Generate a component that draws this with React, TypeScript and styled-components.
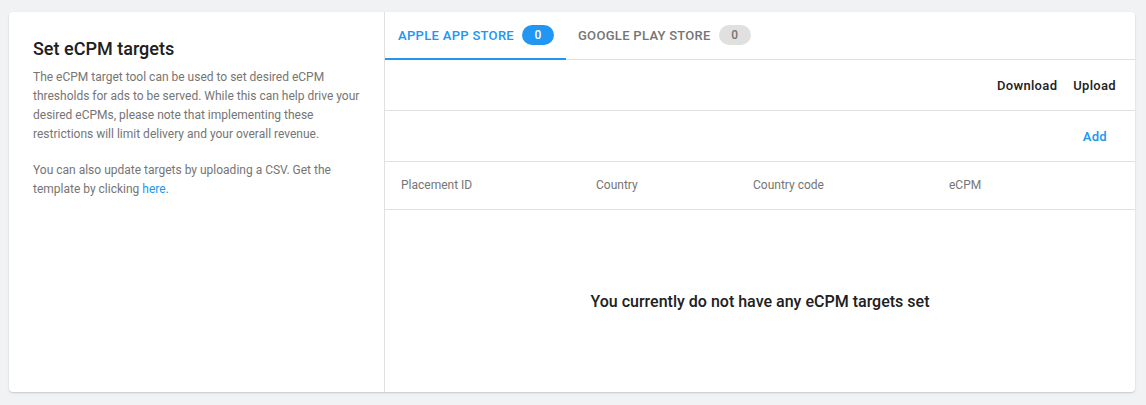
import React from 'react';
import styled, { createGlobalStyle } from 'styled-components';

const GlobalStyle = createGlobalStyle`
  *, *::before, *::after {
    box-sizing: border-box;
  }
  html, body {
    margin: 0;
    padding: 0;
    background: #f1f2f4;
    font-family: Roboto, "Liberation Sans", sans-serif;
  }
`;

const medium = `"Roboto Medium", Roboto, "Liberation Sans", sans-serif`;

const Page = styled.div`
  padding: 12px 11px 13px 9px;
`;

const Card = styled.div`
  display: flex;
  height: 380px;
  background: #fff;
  border-radius: 4px;
  box-shadow: 0 1px 2px rgba(0, 0, 0, 0.18);
  overflow: hidden;
`;

const InfoPanel = styled.div`
  width: 376px;
  flex-shrink: 0;
  padding: 25px 24px;
  border-right: 1px solid #e0e0e0;
`;

const Title = styled.h2`
  margin: 0 0 7px;
  font-family: ${medium};
  font-size: 18px;
  font-weight: 500;
  line-height: 24px;
  color: #212121;
`;

const Paragraph = styled.p`
  margin: 0 0 17px;
  font-size: 12px;
  line-height: 19px;
  color: #757575;
`;

const TextLink = styled.a`
  color: #2196f3;
  text-decoration: none;
`;

const Main = styled.div`
  flex: 1;
  display: flex;
  flex-direction: column;
`;

const TabBar = styled.div`
  display: flex;
  height: 48px;
  padding-left: 1px;
  border-bottom: 1px solid #e0e0e0;
`;

const Tab = styled.div<{ $active?: boolean }>`
  display: flex;
  align-items: center;
  gap: 8px;
  padding: 0 12px;
  font-family: ${medium};
  font-size: 13px;
  font-weight: 500;
  letter-spacing: 0.3px;
  text-transform: uppercase;
  color: ${p => (p.$active ? '#2196f3' : '#757575')};
  border-bottom: 2px solid ${p => (p.$active ? '#2196f3' : 'transparent')};
  margin-bottom: -1px;
  &:first-child {
    margin-left: -1px;
    padding-left: 13px;
  }
`;

const Badge = styled.span<{ $active?: boolean }>`
  display: inline-flex;
  align-items: center;
  justify-content: center;
  min-width: 32px;
  height: 20px;
  border-radius: 10px;
  font-size: 12px;
  font-weight: 500;
  letter-spacing: 0;
  background: ${p => (p.$active ? '#2196f3' : '#e0e0e0')};
  color: ${p => (p.$active ? '#fff' : '#757575')};
`;

const ActionRow = styled.div<{ $right?: number }>`
  display: flex;
  justify-content: flex-end;
  align-items: center;
  gap: 16px;
  height: 51px;
  padding-right: ${p => p.$right ?? 19}px;
  border-bottom: 1px solid #e0e0e0;
`;

const ActionButton = styled.button<{ $primary?: boolean }>`
  border: none;
  background: none;
  padding: 0;
  font-family: ${medium};
  font-size: 13px;
  font-weight: 500;
  letter-spacing: 0.3px;
  color: ${p => (p.$primary ? '#2196f3' : '#212121')};
  cursor: pointer;
`;

const HeaderRow = styled.div`
  display: grid;
  grid-template-columns: 195px 157px 196px 1fr;
  align-items: center;
  height: 48px;
  padding-left: 16px;
  padding-bottom: 2px;
  border-bottom: 1px solid #e0e0e0;
`;

const HeaderCell = styled.div`
  font-size: 12px;
  color: #757575;
`;

const Empty = styled.div`
  flex: 1;
  display: flex;
  align-items: center;
  justify-content: center;
  font-family: ${medium};
  font-size: 16px;
  font-weight: 500;
  color: #212121;
`;

const columns = ['Placement ID', 'Country', 'Country code', 'eCPM'];

export default function App() {
  return (
    <>
      <GlobalStyle />
      <Page>
        <Card>
          <InfoPanel>
            <Title>Set eCPM targets</Title>
            <Paragraph>
              The eCPM target tool can be used to set desired eCPM thresholds for ads to be served. While this can
              help drive your desired eCPMs, please note that implementing these restrictions will limit delivery
              and your overall revenue.
            </Paragraph>
            <Paragraph>
              You can also update targets by uploading a CSV. Get the template by clicking{' '}
              <TextLink href="#">here</TextLink>.
            </Paragraph>
          </InfoPanel>
          <Main>
            <TabBar>
              <Tab $active>
                Apple App Store <Badge $active>0</Badge>
              </Tab>
              <Tab>
                Google Play Store <Badge>0</Badge>
              </Tab>
            </TabBar>
            <ActionRow>
              <ActionButton>Download</ActionButton>
              <ActionButton>Upload</ActionButton>
            </ActionRow>
            <ActionRow $right={28}>
              <ActionButton $primary>Add</ActionButton>
            </ActionRow>
            <HeaderRow>
              {columns.map(c => (
                <HeaderCell key={c}>{c}</HeaderCell>
              ))}
            </HeaderRow>
            <Empty>You currently do not have any eCPM targets set</Empty>
          </Main>
        </Card>
      </Page>
    </>
  );
}
